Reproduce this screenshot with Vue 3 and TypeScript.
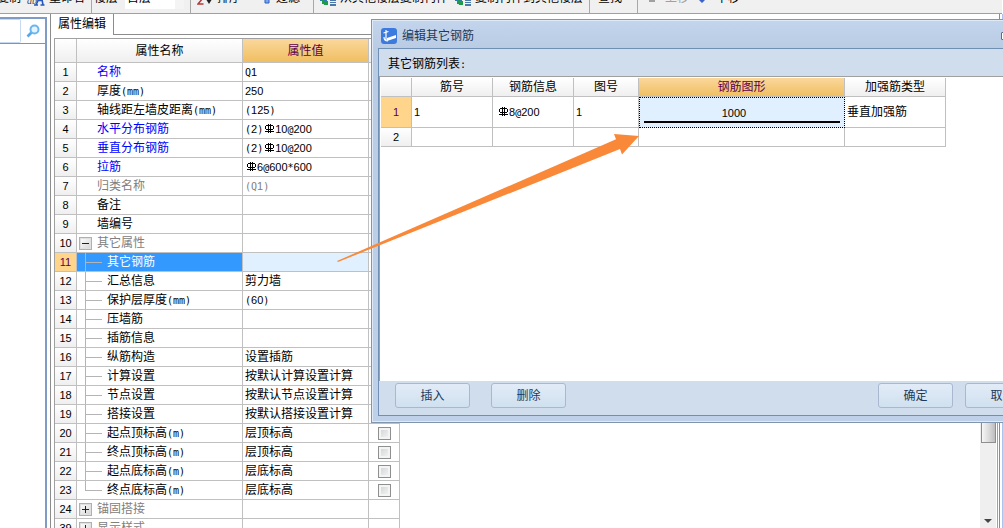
<script setup lang="ts">
import { h, ref } from 'vue'

interface PropertyRow {
  no: number
  name: string
  value?: string
  tone?: 'key' | 'muted'
  kind?: 'group-open' | 'group-closed' | 'child' | 'last'
  check?: boolean
}

const rows: PropertyRow[] = [
  { no: 1, name: '名称', value: 'Q1', tone: 'key' },
  { no: 2, name: '厚度(mm)', value: '250' },
  { no: 3, name: '轴线距左墙皮距离(mm)', value: '(125)' },
  { no: 4, name: '水平分布钢筋', value: '(2)Φ10@200', tone: 'key' },
  { no: 5, name: '垂直分布钢筋', value: '(2)Φ10@200', tone: 'key' },
  { no: 6, name: '拉筋', value: 'Φ6@600*600', tone: 'key' },
  { no: 7, name: '归类名称', value: '(Q1)', tone: 'muted' },
  { no: 8, name: '备注' },
  { no: 9, name: '墙编号' },
  { no: 10, name: '其它属性', tone: 'muted', kind: 'group-open' },
  { no: 11, name: '其它钢筋', kind: 'child' },
  { no: 12, name: '汇总信息', value: '剪力墙', kind: 'child' },
  { no: 13, name: '保护层厚度(mm)', value: '(60)', kind: 'child' },
  { no: 14, name: '压墙筋', kind: 'child' },
  { no: 15, name: '插筋信息', kind: 'child' },
  { no: 16, name: '纵筋构造', value: '设置插筋', kind: 'child' },
  { no: 17, name: '计算设置', value: '按默认计算设置计算', kind: 'child' },
  { no: 18, name: '节点设置', value: '按默认节点设置计算', kind: 'child' },
  { no: 19, name: '搭接设置', value: '按默认搭接设置计算', kind: 'child' },
  { no: 20, name: '起点顶标高(m)', value: '层顶标高', kind: 'child', check: true },
  { no: 21, name: '终点顶标高(m)', value: '层顶标高', kind: 'child', check: true },
  { no: 22, name: '起点底标高(m)', value: '层底标高', kind: 'child', check: true },
  { no: 23, name: '终点底标高(m)', value: '层底标高', kind: 'last', check: true },
  { no: 24, name: '锚固搭接', tone: 'muted', kind: 'group-closed' },
  { no: 39, name: '显示样式', tone: 'muted', kind: 'group-closed' },
]

const selected = ref(11)

// Splits a label into CJK text, digits, other half-width text and the rebar grade symbol.
const Txt = (props: { t: string }) =>
  (props.t.match(/Φ|\d+|[\x20-\x2f\x3a-\x7e]+|[^\x20-\x7eΦ]+/g) ?? []).map((run) => {
    if (run === 'Φ') {
      return h('svg', { class: 'grade', viewBox: '0 0 12 12', role: 'img', 'aria-label': 'Φ' }, [
        h('path', { d: 'M5.5 1v9M7.5 1v9M2 8.5h9M3 2.500h7M2.500 3v3M10.500 3v3M3 6.500h7' }),
      ])
    }
    if (/^\d/.test(run)) return h('span', { class: 'num' }, run)
    return /^[\x20-\x7e]/.test(run) ? h('span', { class: 'half' }, run) : run
  })
Txt.props = ['t']
</script>

<template>
  <div class="app">
    <header class="toolbar">
      <div class="group g-edit">
        <button class="tool">复制</button>
        <button class="tool rename">
          <svg width="18" height="16" viewBox="0 0 18 16"><text x="0" y="14" class="ab">ab</text><path d="M9 15L14 4l2 11M11 10.500h5M7 15h4M13.500 15h4" fill="none" stroke="#2a58b8" stroke-width="1.600" /></svg>
          重命名
        </button>
      </div>
      <div class="group g-floor">
        <label for="floor">楼层</label>
        <select id="floor"><option>首层</option></select>
      </div>
      <div class="group g-sort">
        <button class="tool">
          <svg width="16" height="16" viewBox="0 0 16 16"><path d="M1 8h5L1 14h5.500" fill="none" stroke="#b03a3a" stroke-width="1.500" /><path d="M12 2v9" stroke="#222" stroke-width="1.500" /><path d="M9.500 10h5L12 14z" fill="#222" /></svg>
          排序<i class="caret"></i>
        </button>
        <button class="tool filter">
          <svg width="8" height="16" viewBox="0 0 8 16"><path d="M2 2h4v11H2z" fill="#7ea6ee" stroke="#2d5fc4" /></svg>
          过滤<i class="caret"></i>
        </button>
      </div>
      <div class="group g-copy">
        <button v-for="t in ['从其他楼层复制构件', '复制构件到其他楼层']" :key="t" class="tool">
          <svg width="16" height="16" viewBox="0 0 16 16"><path d="M0 8h7v3H0z" fill="#2f78b8" /><path d="M3 10v3h3" fill="none" stroke="#1f9a4a" stroke-width="2" /><path d="M3 11h5v4H4z" fill="#1f9a4a" /><path d="M10 4h6v4h-6zM10 9h6v2h-6zM10 12h6v1h-6zM10 14h6v2h-6z" fill="#4a78a8" /></svg>
          {{ t }}
        </button>
      </div>
      <div class="group g-find">
        <button class="tool">查找<i class="caret"></i></button>
      </div>
      <div class="group g-move">
        <button class="tool off" disabled>
          <svg width="6" height="16" viewBox="0 0 6 16"><path d="M0 6h6v6H0z" fill="#a0a0a0" /></svg>
          上移
        </button>
        <button class="tool">
          <svg width="8" height="16" viewBox="0 0 8 16"><path d="M2 4h4v5h2L4 13 0 9h2z" fill="#3a62cc" /></svg>
          下移
        </button>
      </div>
    </header>

    <main class="work">
      <aside class="finder">
        <div class="search">
          <input type="text" aria-label="搜索" />
          <button aria-label="查找构件">
            <svg width="14" height="14" viewBox="0 0 14 14" fill="none"><path d="M1.500 12.500L5.500 8.500" stroke="#5aa7e6" stroke-width="2.600" /><circle cx="8.500" cy="5.500" r="4" fill="#e6f4ff" stroke="#6ab6ee" stroke-width="2" /></svg>
          </button>
        </div>
      </aside>

      <section class="props">
        <div class="tabs"><h2>属性编辑</h2></div>
        <div class="sheet">
          <div class="rows">
            <table class="grid">
              <colgroup><col class="c-no" /><col class="c-name" /><col class="c-value" /><col class="c-extra" /></colgroup>
              <thead>
                <tr><th></th><th>属性名称</th><th class="hot">属性值</th><th></th></tr>
              </thead>
              <tbody>
                <tr v-for="r in rows" :key="r.no" :class="{ selected: r.no === selected }" @click="selected = r.no">
                  <th scope="row"><Txt :t="String(r.no)" /></th>
                  <td class="name" :class="r.tone">
                    <div class="cell">
                      <span v-if="r.kind === 'child' || r.kind === 'last'" class="branch" :class="{ last: r.kind === 'last' }"></span>
                      <span v-else class="lead">
                        <button v-if="r.kind" class="toggle" :class="{ closed: r.kind === 'group-closed' }" :aria-label="r.name"></button>
                      </span>
                      <span><Txt :t="r.name" /></span>
                    </div>
                  </td>
                  <td class="value" :class="{ muted: r.tone === 'muted' }"><Txt :t="r.value ?? ''" /></td>
                  <td class="extra"><input v-if="r.check" type="checkbox" :aria-label="r.name" /></td>
                </tr>
              </tbody>
            </table>
          </div>
          <div class="scroll"><div class="thumb"></div><i class="down"></i></div>
        </div>
      </section>
      <div class="edge"></div>
    </main>

    <section class="dialog" role="dialog" aria-labelledby="dialog-title">
      <div class="title">
        <svg width="16" height="16" viewBox="0 0 16 16"><rect width="16" height="16" rx="3" fill="#3b7be0" /><path d="M5 2v10M2.500 5l5-1.500M3 9c0 3 2 4 4 4" fill="none" stroke="#fff" stroke-width="1.200" /><path d="M6 10l9-3v3l-9 3z" fill="#fff" /></svg>
        <h1 id="dialog-title">编辑其它钢筋</h1>
        <button class="max" aria-label="最大化"></button>
      </div>
      <div class="body">
        <p class="caption"><Txt t="其它钢筋列表:" /></p>
        <div class="list">
          <table class="grid bars">
            <colgroup><col class="b-no" /><col class="b-mid" /><col class="b-mid" /><col class="b-fig" /><col class="b-shape" /><col class="b-type" /></colgroup>
            <thead>
              <tr><th></th><th>筋号</th><th>钢筋信息</th><th>图号</th><th class="hot">钢筋图形</th><th>加强筋类型</th></tr>
            </thead>
            <tbody>
              <tr class="tall">
                <th scope="row" class="on"><Txt t="1" /></th>
                <td><Txt t="1" /></td>
                <td class="info"><Txt t="Φ8@200" /></td>
                <td><Txt t="1" /></td>
                <td class="shape"><div class="figure"><span class="len"><Txt t="1000" /></span></div></td>
                <td>垂直加强筋</td>
              </tr>
              <tr><th scope="row"><Txt t="2" /></th><td></td><td></td><td></td><td></td><td></td></tr>
            </tbody>
          </table>
        </div>
        <div class="actions">
          <button>插入</button>
          <button>删除</button>
          <span class="space"></span>
          <button>确定</button>
          <button>取消</button>
        </div>
      </div>
    </section>

    <svg class="pointer" aria-hidden="true"><path d="M337 261L616 139.300 614 134 639 136 622 154.500 620 149 338 262z" fill="#f98938" /></svg>
  </div>
</template>

<style>
body {
  overflow: hidden;
}
.half {
  font-family: "DejaVu Sans Mono", "Liberation Mono", monospace;
  font-size: 10px;
  line-height: 12px;
}
.num {
  font-family: "Liberation Sans", Arial, sans-serif;
  font-size: 11px;
  line-height: 12px;
}
.grade {
  width: 12px;
  height: 12px;
  vertical-align: -2px;
  fill: none;
  stroke: currentColor;
}
</style>

<style scoped>
* {
  box-sizing: border-box;
}
.app {
  position: relative;
  display: flex;
  flex-direction: column;
  height: 100vh;
  overflow: hidden;
  background: #fff;
  color: #000;
  font: 12px/18px "Liberation Sans", "Noto Sans CJK SC", sans-serif;
}
button,
input,
select {
  margin: 0;
  padding: 0;
  font: inherit;
  color: inherit;
}
h1,
h2,
p {
  margin: 0;
  font-size: 12px;
  font-weight: 400;
}

/* toolbar */
.toolbar {
  flex: none;
  display: flex;
  align-items: flex-end;
  height: 14px;
  margin-right: 1px;
  border-bottom: 1px solid #a0a0a0;
  background: #f0f0f0;
  overflow: hidden;
}
.group {
  flex: none;
  display: flex;
  height: 26px;
  padding-bottom: 3px;
  border-right: 1px solid #a8a8a8;
  white-space: nowrap;
  line-height: 22px;
}
.tool {
  display: flex;
  align-items: center;
  gap: 4px;
  height: 22px;
  border: 0;
  background: none;
}
.tool.off {
  color: #a0a0a0;
}
.ab {
  font: italic 10px "Liberation Serif", serif;
  fill: #444;
}
.caret {
  border: 3px solid transparent;
  border-top-color: #222;
  border-bottom: 0;
}
.g-edit {
  gap: 6px;
  width: 95px;
  margin-left: -3px;
}
.g-floor {
  width: 99px;
  padding-left: 2px;
  gap: 7px;
}
.g-floor select {
  width: 59px;
  height: 22px;
  padding-left: 2px;
  border: 0;
  border-radius: 0;
  appearance: none;
  background: linear-gradient(to right, #fff 50px, #f4f4f4 50px);
}
.g-sort {
  width: 123px;
  padding-left: 6px;
  gap: 12px;
}
.filter {
  gap: 5px;
}
.g-copy {
  width: 276px;
  padding-left: 6px;
  gap: 7px;
}
.g-find {
  width: 48px;
  padding-left: 8px;
}
.g-move {
  border-right: 0;
  padding-left: 11px;
  gap: 9px;
}
.g-move .tool {
  gap: 10px;
}

/* work area */
.work {
  flex: 1;
  display: flex;
  min-height: 0;
}
.finder {
  flex: none;
  width: 47px;
  margin: 3px 3px 0 0;
  border-top: 2px solid #7f9cc6;
  border-right: 2px solid #7f9cc6;
}
.search {
  display: flex;
  align-items: center;
  justify-content: space-between;
  height: 25px;
  padding-right: 5px;
  border-bottom: 1px solid #7f94ad;
}
.search input {
  width: 21px;
  height: 24px;
  border: 1px solid #c5d9f1;
  border-left: 0;
  border-radius: 0 2px 2px 0;
}
.search button {
  display: flex;
  border: 0;
  background: none;
}
.props {
  flex: 1;
  display: flex;
  flex-direction: column;
  min-width: 0;
  border-left: 1px solid #8c8c8c;
  border-right: 1px solid #8c8c8c;
}
.tabs {
  flex: none;
  display: flex;
  height: 21px;
}
.tabs h2 {
  width: 63px;
  padding-left: 7px;
  border-right: 1px solid #8c8c8c;
  line-height: 20px;
}
.tabs::after {
  content: "";
  flex: 1;
  border-bottom: 1px solid #8c8c8c;
}
.sheet {
  flex: 1;
  display: flex;
  min-height: 0;
  margin: 3px 1px 0 3px;
  border: 1px solid #a0a0a0;
  border-bottom: 0;
}
.rows {
  flex: 1;
  min-width: 0;
  overflow: hidden;
}
.scroll {
  flex: none;
  display: flex;
  flex-direction: column;
  justify-content: space-between;
  align-items: center;
  width: 16px;
  margin-right: 1px;
  padding-bottom: 5px;
  background: #efefef;
}
.thumb {
  width: 15px;
  height: 404px;
  border: 1px solid #8e8e8e;
  background: linear-gradient(to right, #f6f6f6, #dcdcdc 50%, #bdbdbd);
}
.down {
  border: 4px solid transparent;
  border-top-color: #444;
  border-bottom: 0;
}
.edge {
  flex: none;
  width: 3px;
  border-right: 1px solid #aac4ec;
}

/* grids */
.grid {
  table-layout: fixed;
  border-collapse: separate;
  border-spacing: 0;
  width: 345px;
}
.grid th,
.grid td {
  height: 19px;
  padding: 0;
  border-right: 1px solid #c0c0c0;
  border-bottom: 1px solid #c0c0c0;
  font-weight: 400;
  line-height: 16px;
  white-space: nowrap;
}
.grid th {
  background: linear-gradient(#fff, #efefef);
  text-align: center;
}
.grid thead th {
  height: 24px;
}
.grid td {
  padding-left: 2px;
}
.grid th.hot {
  background: linear-gradient(#fad79b, #f0bf62);
  color: #5a0050;
}
.c-no { width: 22px; }
.c-name { width: 166px; }
.c-value { width: 126px; }
.c-extra { width: 31px; }
.grid td.name {
  padding-left: 0;
}
.name .cell {
  display: flex;
  height: 18px;
  line-height: 18px;
}
.key {
  color: #00f;
}
.muted {
  color: #808080;
}
.lead {
  display: flex;
  align-items: center;
  width: 20px;
  padding-left: 2px;
}
.branch {
  width: 17px;
  margin: 0 5px 0 8px;
  background:
    linear-gradient(#b4b4b4, #b4b4b4) 0 50% / 17px 1px no-repeat,
    linear-gradient(#b4b4b4, #b4b4b4) 0 0 / 1px 100% no-repeat;
}
.branch.last {
  background-size: 17px 1px, 1px 50%;
}
.toggle {
  width: 13px;
  height: 13px;
  border: 1px solid #b0b0b0;
  background:
    linear-gradient(#222, #222) center / 7px 1px no-repeat,
    linear-gradient(135deg, #fff, #d4d4d4);
  box-shadow: inset 0 0 0 1px #e0e0e0;
}
.toggle.closed {
  background:
    linear-gradient(#222, #222) center / 7px 1px no-repeat,
    linear-gradient(#222, #222) center / 1px 7px no-repeat,
    linear-gradient(135deg, #fff, #d4d4d4);
}
.selected th,
.grid th.on {
  background: #ffd58c;
  color: #5a0050;
}
.selected .name {
  background: #39f;
  color: #fff;
}
.selected .value {
  background: #e0f0ff;
}
.grid td.extra {
  padding: 0;
  text-align: center;
}
.extra input {
  display: block;
  width: 13px;
  height: 13px;
  margin: 0 auto;
  appearance: none;
  border: 1px solid #8e8f8f;
  background: linear-gradient(135deg, #cdd0d4, #f8f8f8);
  box-shadow: inset 0 0 0 2px #f4f4f4;
}

/* dialog */
.dialog {
  position: absolute;
  top: 19px;
  left: 371px;
  right: -51px;
  padding: 0 6px 6px;
  border: 1px solid #8095ae;
  background: linear-gradient(#c3d5ec, #b9cce4 28px, #bed1e8);
  box-shadow: inset 1px 1px #dfeaf6, inset 0 -1px #dfeaf6;
}
.title {
  display: flex;
  align-items: center;
  gap: 5px;
  height: 28px;
  padding: 4px 36px 0 3px;
  color: #1e395b;
}
.max {
  width: 10px;
  height: 8px;
  margin-left: auto;
  border: 1px solid #5a6a80;
  border-radius: 1px;
  background: #fff;
}
.body {
  border: 1px solid #6f8fb4;
  background: #d0dded;
}
.caption {
  height: 27px;
  padding: 6px 0 0 9px;
}
.list {
  height: 305px;
  padding: 1px 0 0 1px;
  border-top: 1px solid #a0a0a0;
  border-left: 1px solid #a0a0a0;
  background: #fff;
}
.bars {
  width: 565px;
}
.bars thead th {
  height: 19px;
}
.b-no { width: 31px; }
.b-mid { width: 81px; }
.b-fig { width: 65px; }
.b-shape { width: 206px; }
.b-type { width: 101px; }
.grid .tall th,
.grid .tall td {
  height: 31px;
}
.grid td.info {
  padding-left: 4px;
}
.grid td.shape {
  padding: 0;
  border: 1px dotted #000;
  background: #e0f0ff;
}
.figure {
  margin: 0 4px;
  padding-top: 2px;
  border-bottom: 2px solid #000;
  text-align: center;
}
.len {
  display: block;
  padding-right: 16px;
}
.actions {
  display: flex;
  height: 34px;
  padding: 2px 6px 0 16px;
}
.actions button {
  width: 75px;
  height: 25px;
  margin-right: 21px;
  border: 1px solid #a9b8d0;
  border-radius: 3px;
  background: linear-gradient(#e2ecf8, #d0e0ef);
  color: #1e395b;
}
.actions .space {
  flex: 1;
}
.actions .space ~ button {
  margin-right: 0;
}
.actions button:last-child {
  margin-left: 12px;
}

.pointer {
  position: absolute;
  inset: 0;
  width: 100%;
  height: 100%;
  pointer-events: none;
}
</style>
